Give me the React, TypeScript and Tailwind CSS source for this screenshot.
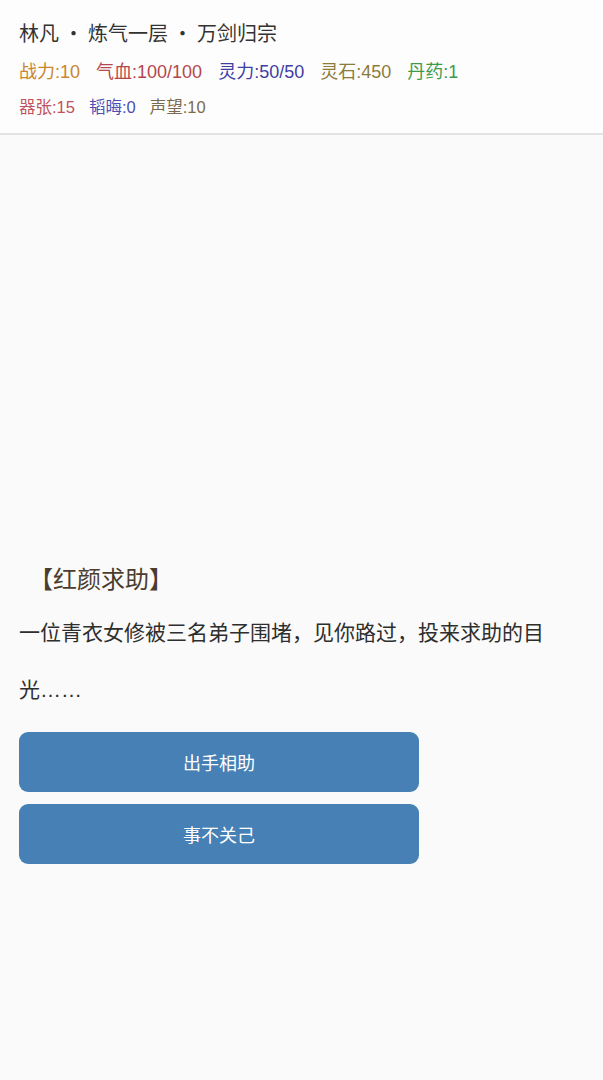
import React from "react";

interface Stat {
  label: string;
  value: string;
  color: string;
}

const ROW_ONE: Stat[] = [
  { label: "战力", value: "10", color: "text-[#c9862c]" },
  { label: "气血", value: "100/100", color: "text-[#b4464e]" },
  { label: "灵力", value: "50/50", color: "text-[#3e3ea3]" },
  { label: "灵石", value: "450", color: "text-[#8d7b3b]" },
  { label: "丹药", value: "1", color: "text-[#3d9a4b]" },
];

const ROW_TWO: Stat[] = [
  { label: "器张", value: "15", color: "text-[#bf525b]" },
  { label: "韬晦", value: "0", color: "text-[#4b4fb2]" },
  { label: "声望", value: "10", color: "text-[#7c6a4e]" },
];

const LATIN_FIRST = { fontFamily: '"Liberation Sans", "Noto Sans CJK SC", sans-serif' };

function StatRow({ stats, className }: { stats: Stat[]; className: string }) {
  return (
    <div className={`flex items-center leading-[24px] ${className}`} style={LATIN_FIRST}>
      {stats.map((s) => (
        <span key={s.label} className={s.color}>
          {s.label}:{s.value}
        </span>
      ))}
    </div>
  );
}

export default function App() {
  const choices = ["出手相助", "事不关己"];

  return (
    <div
      className="min-h-screen bg-[#fafafa] text-[#333]"
      style={{ fontFamily: '"Noto Sans CJK SC", "Noto Sans", sans-serif' }}
    >
      {/* 角色状态 */}
      <header className="bg-[#fdfdfd] border-b-2 border-[#e2e2e2] px-[19px] pt-[19px] pb-[14px]">
        <div className="text-[20px] leading-[28px] text-[#333]">林凡 · 炼气一层 · 万剑归宗</div>
        <div className="mt-[13px] flex flex-col gap-[11px]">
          <StatRow stats={ROW_ONE} className="text-[18px] gap-[16px]" />
          <StatRow stats={ROW_TWO} className="text-[16.5px] gap-[14px]" />
        </div>
      </header>

      {/* 场景 */}
      <div className="h-[427px]" />

      {/* 事件 */}
      <section className="px-[19px]">
        <h2 className="ml-[10px] text-[24px] leading-[32px] text-[#4a3d2d]">【红颜求助】</h2>
        <p className="mt-[10px] w-[535px] text-[21px] leading-[57px] text-[#2e2e2e]" style={LATIN_FIRST}>
          一位青衣女修被三名弟子围堵，见你路过，投来求助的目光……
        </p>
        <div className="mt-[14px] flex flex-col gap-[12px]">
          {choices.map((c) => (
            <button
              key={c}
              className="w-[400px] h-[60px] rounded-[9px] bg-[#4680b5] text-white text-[18px]"
            >
              {c}
            </button>
          ))}
        </div>
      </section>
    </div>
  );
}
